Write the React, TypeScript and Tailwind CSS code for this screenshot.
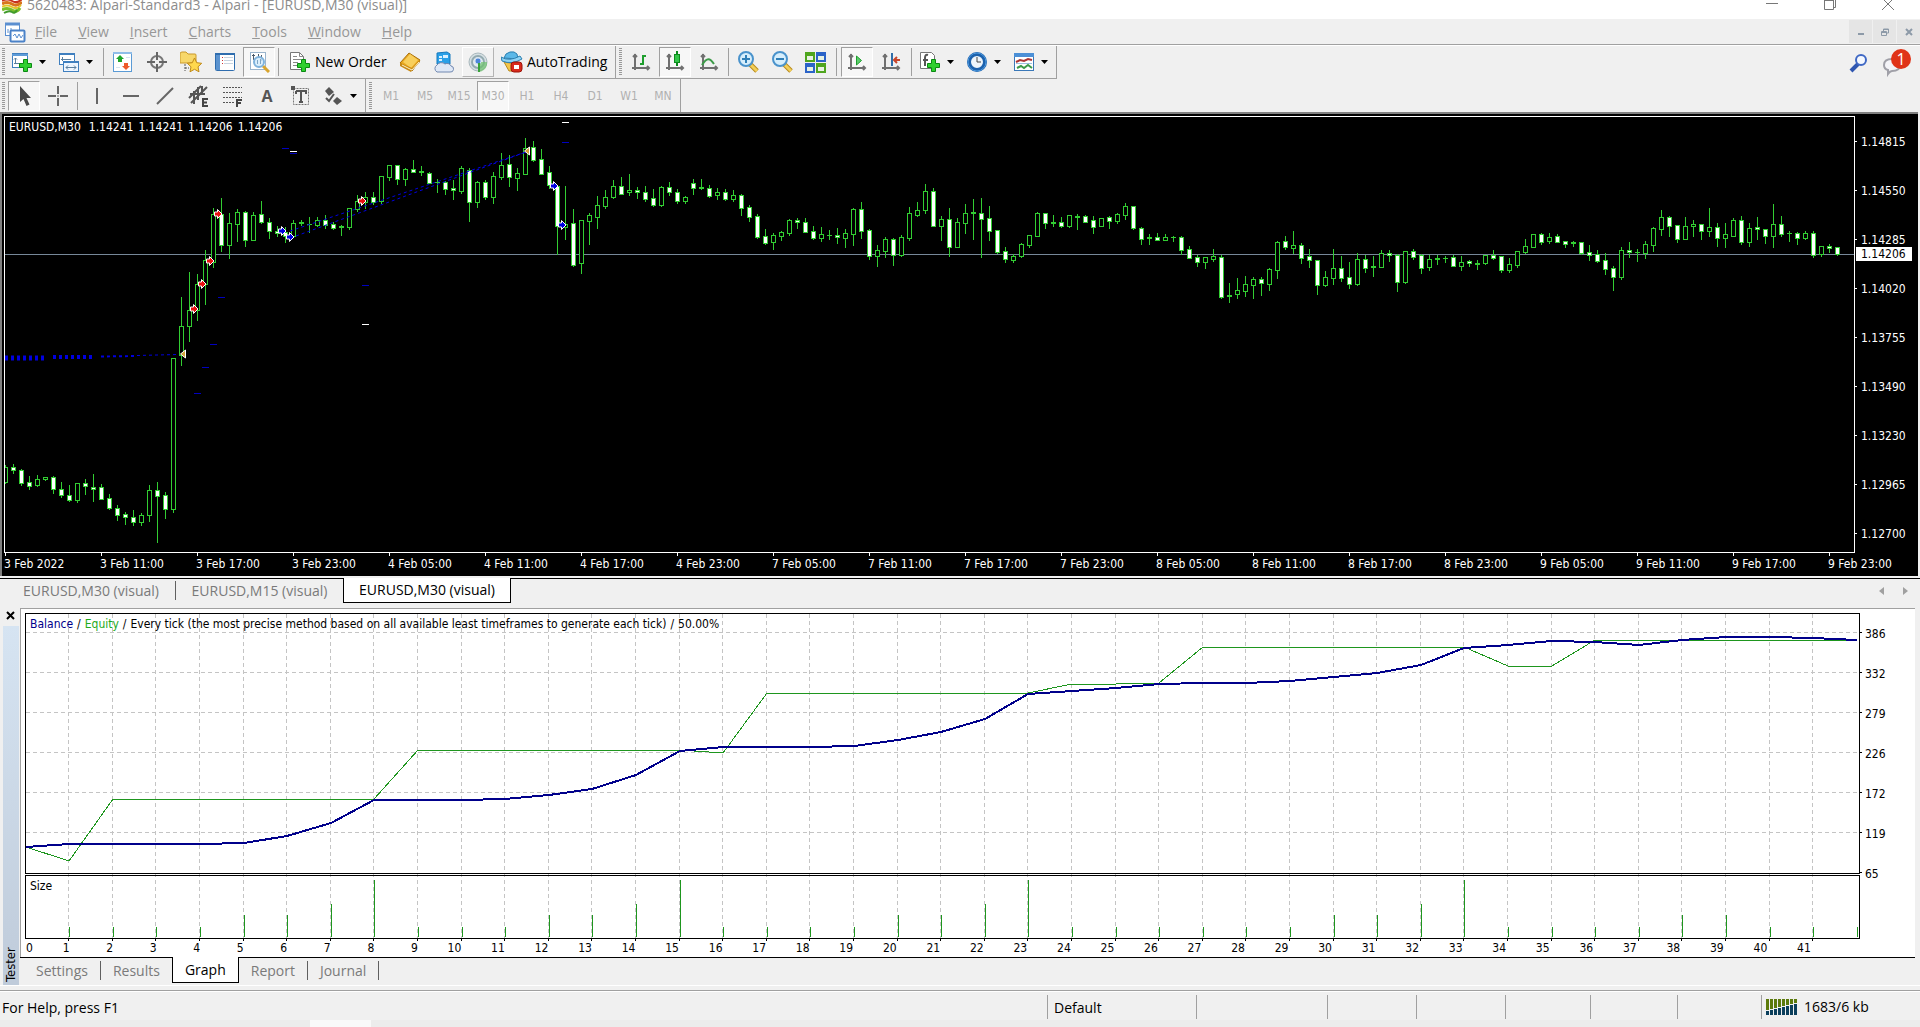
import type { ReactNode } from "react";
import clsx from "clsx";

// [high, open, close, low] as vertical plot positions, one candle every 8px
const candles: number[][] = [
  [355, 372, 357, 373], [354, 357, 360, 363], [359, 360, 373, 375], [366, 372, 376, 379], [365, 375, 369, 376],
  [367, 369, 367, 370], [366, 367, 379, 383], [372, 379, 385, 387], [375, 385, 390, 391], [373, 390, 373, 392],
  [369, 373, 376, 384], [364, 377, 379, 391], [374, 377, 389, 389], [384, 388, 398, 399], [395, 398, 405, 410],
  [402, 404, 407, 414], [400, 407, 412, 415], [403, 412, 405, 415], [375, 405, 380, 411], [372, 380, 386, 432],
  [382, 385, 399, 408], [248, 399, 248, 402], [187, 245, 216, 255], [162, 216, 200, 231], [164, 200, 174, 210],
  [140, 174, 150, 194], [98, 152, 104, 157], [88, 104, 135, 141], [103, 135, 113, 148], [99, 114, 102, 131],
  [101, 102, 130, 136], [102, 130, 105, 130], [91, 104, 112, 113], [108, 112, 121, 128], [116, 121, 123, 126],
  [117, 122, 126, 132], [110, 126, 113, 127], [110, 112, 113, 115], [107, 114, 114, 122], [107, 115, 110, 116],
  [105, 110, 115, 118], [112, 114, 118, 119], [115, 116, 117, 125], [98, 117, 98, 119], [85, 99, 91, 101],
  [82, 92, 87, 98], [82, 87, 92, 94], [66, 91, 66, 93], [55, 67, 55, 70], [55, 55, 69, 74],
  [58, 69, 59, 75], [50, 59, 62, 62], [56, 61, 62, 65], [62, 63, 73, 73], [69, 72, 72, 82],
  [71, 72, 79, 84], [70, 78, 80, 89], [56, 81, 58, 83], [58, 60, 92, 111], [71, 92, 72, 97],
  [70, 72, 87, 89], [62, 87, 66, 93], [43, 67, 55, 69], [45, 54, 67, 76], [58, 68, 63, 80],
  [28, 64, 38, 64], [31, 37, 50, 51], [39, 49, 64, 64], [56, 62, 75, 78], [75, 76, 116, 144],
  [76, 117, 114, 129], [99, 113, 155, 156], [110, 153, 110, 163], [103, 111, 105, 134], [86, 107, 95, 118],
  [80, 96, 87, 98], [70, 87, 76, 88], [67, 76, 84, 84], [64, 82, 80, 85], [77, 80, 82, 88],
  [76, 82, 89, 91], [79, 88, 95, 96], [76, 95, 77, 96], [72, 77, 82, 85], [79, 82, 91, 93],
  [86, 91, 87, 93], [69, 73, 78, 84], [69, 77, 78, 79], [75, 78, 86, 87], [78, 85, 82, 89],
  [79, 82, 89, 90], [80, 89, 85, 91], [84, 85, 98, 105], [95, 97, 107, 111], [104, 106, 127, 128],
  [119, 126, 133, 134], [123, 132, 125, 139], [121, 126, 122, 130], [109, 123, 110, 125], [108, 110, 112, 118],
  [108, 112, 122, 122], [116, 121, 128, 129], [117, 128, 124, 131], [120, 125, 125, 129], [118, 125, 127, 133],
  [119, 128, 123, 137], [98, 124, 99, 135], [92, 99, 121, 128], [119, 120, 146, 149], [135, 146, 140, 156],
  [127, 141, 129, 147], [128, 129, 145, 155], [125, 145, 127, 146], [97, 128, 103, 130], [92, 105, 100, 106],
  [74, 100, 81, 103], [78, 81, 116, 116], [106, 116, 109, 130], [98, 109, 137, 146], [108, 137, 112, 137],
  [94, 113, 103, 123], [89, 102, 103, 129], [88, 103, 109, 147], [96, 108, 121, 130], [120, 120, 142, 143],
  [137, 141, 149, 152], [144, 150, 146, 152], [133, 146, 134, 147], [125, 135, 125, 137], [102, 126, 103, 126],
  [103, 103, 113, 118], [105, 112, 113, 116], [107, 112, 116, 117], [105, 116, 105, 117], [104, 106, 107, 119],
  [105, 106, 112, 112], [106, 110, 117, 123], [108, 116, 108, 116], [106, 107, 111, 118], [103, 111, 104, 113],
  [93, 105, 96, 109], [96, 96, 118, 119], [117, 118, 129, 134], [124, 127, 128, 134], [123, 127, 130, 130],
  [124, 130, 127, 130], [126, 127, 127, 131], [126, 127, 140, 144], [136, 139, 148, 148], [145, 147, 152, 156],
  [147, 152, 147, 158], [139, 149, 146, 151], [145, 147, 187, 188], [173, 185, 186, 192], [168, 184, 180, 188],
  [166, 181, 174, 186], [167, 175, 169, 188], [167, 169, 173, 185], [158, 174, 159, 180], [131, 160, 132, 168],
  [126, 131, 137, 139], [121, 138, 135, 143], [133, 135, 148, 153], [139, 146, 150, 157], [150, 150, 175, 184],
  [161, 175, 167, 176], [139, 168, 158, 174], [146, 158, 168, 171], [152, 167, 174, 178], [143, 174, 149, 175],
  [145, 149, 158, 162], [146, 156, 157, 166], [140, 157, 143, 157], [140, 143, 145, 151], [144, 145, 172, 181],
  [141, 172, 141, 173], [139, 141, 147, 149], [144, 145, 158, 163], [145, 157, 149, 160], [145, 148, 149, 154],
  [146, 148, 148, 152], [145, 147, 156, 156], [146, 156, 152, 160], [150, 151, 153, 156], [150, 153, 154, 159],
  [145, 153, 145, 154], [140, 145, 148, 149], [146, 146, 160, 162], [148, 160, 154, 162], [141, 155, 141, 157],
  [129, 142, 136, 143], [124, 137, 124, 137], [123, 124, 132, 134], [123, 131, 127, 133], [124, 126, 132, 132],
  [131, 131, 134, 137], [131, 132, 133, 136], [132, 132, 143, 144], [135, 142, 145, 150], [140, 144, 151, 152],
  [143, 150, 159, 164], [156, 158, 167, 180], [137, 167, 140, 169], [132, 140, 142, 147], [139, 142, 142, 151],
  [131, 143, 134, 148], [117, 135, 118, 141], [100, 119, 107, 125], [106, 107, 116, 126], [115, 115, 129, 132],
  [107, 129, 116, 129], [110, 116, 114, 126], [114, 114, 121, 129], [98, 121, 117, 126], [113, 117, 128, 136],
  [113, 128, 124, 137], [108, 126, 110, 126], [106, 110, 132, 134], [113, 132, 118, 136], [107, 117, 119, 129],
  [119, 119, 126, 133], [94, 126, 114, 137], [106, 114, 124, 126], [121, 123, 123, 131], [122, 123, 128, 134],
  [121, 128, 123, 129], [121, 123, 145, 147], [136, 144, 136, 146], [134, 136, 138, 142], [137, 137, 144, 145],
];

const sells = [[194, 199], [202, 174], [210, 151], [218, 104], [362, 91]];
const buys = [[282, 121], [290, 127], [554, 76], [562, 115]];
const closes = [[183, 244], [527, 41]];
const stops = [[282, 38], [290, 43], [218, 187], [210, 234], [202, 257], [194, 283], [562, 32], [362, 175]];
const limits = [[290, 41], [562, 12], [362, 214]];

const prices = ["1.14815", "1.14550", "1.14285", "1.14020", "1.13755", "1.13490", "1.13230", "1.12965", "1.12700"];
const times = [
  "3 Feb 2022", "3 Feb 11:00", "3 Feb 17:00", "3 Feb 23:00", "4 Feb 05:00", "4 Feb 11:00", "4 Feb 17:00",
  "4 Feb 23:00", "7 Feb 05:00", "7 Feb 11:00", "7 Feb 17:00", "7 Feb 23:00", "8 Feb 05:00", "8 Feb 11:00",
  "8 Feb 17:00", "8 Feb 23:00", "9 Feb 05:00", "9 Feb 11:00", "9 Feb 17:00", "9 Feb 23:00",
];

// one value per closed trade, 0..42
const balance = [
  847, 844, 844, 844, 844, 843, 836, 823, 800, 800, 800, 799, 795, 789, 775, 751, 747, 747, 747, 746, 740, 732,
  719, 694, 691, 688, 684, 683, 683, 681, 677, 673, 665, 648, 645, 641, 642, 645, 640, 637, 637, 638, 640,
];
const equity = [
  847, 861, 799, 799, 799, 799, 799, 799, 799, 750, 750, 750, 750, 750, 750, 750, 753, 693, 693, 693, 693, 693,
  693, 693, 684, 684, 683, 647, 647, 647, 647, 647, 647, 647, 666, 666, 640, 640, 640, 640, 640, 640, 640,
];
const lots = [
  0, 10, 10, 10, 10, 22, 22, 33, 57, 10, 10, 10, 22, 22, 33, 57, 10, 10, 10, 10, 22, 22, 33, 57, 10, 10, 10, 10,
  10, 10, 22, 22, 33, 57, 10, 10, 10, 10, 22, 22, 10, 10, 10,
];
const money = ["386", "332", "279", "226", "172", "119", "65"];
const tradeX = (k: number) => Math.round(25.6 + k * 43.6);

function Svg({ children, size = 22 }: { children: ReactNode; size?: number }) {
  return (
    <svg width={size} height={size} viewBox={`0 0 ${size} ${size}`} fill="none" aria-hidden="true" className="shrink-0">
      {children}
    </svg>
  );
}

const Plus = () => (
  <path d="M12.500 8.500h4v4h4v4h-4v4h-4v-4h-4v-4h4z" fill="#2fd02f" stroke="#0a8a12" />
);

const NewChartIcon = () => (
  <Svg>
    <rect x="1.500" y="2.500" width="15" height="14" fill="#fff" stroke="#3f7fbf" />
    <path d="M1 4h16" stroke="#5d9bd8" strokeWidth="2" />
    <path d="M4.500 7v6M3 8.500l1.500-1.500 1.500 1.500M3 12.500h6" stroke="#5a7f9f" />
    <Plus />
  </Svg>
);
const ProfilesIcon = () => (
  <Svg>
    <rect x="1.500" y="2.500" width="15" height="11" fill="#fff" stroke="#3f7fbf" />
    <path d="M1 3h16" stroke="#3f7fbf" strokeWidth="2" />
    <path d="M4.500 6v4M3 8.500h10" stroke="#5a7f9f" />
    <rect x="5.500" y="10.500" width="15" height="10" fill="#eef6ff" stroke="#3f7fbf" />
    <path d="M5 11h16" stroke="#3f7fbf" strokeWidth="2" />
    <path d="M8 16.500h10M10 14.500l-2 2 2 2M16 14.500l2 2-2 2" stroke="#5a7f9f" />
  </Svg>
);
const MarketIcon = () => (
  <Svg>
    <rect x="1.500" y="1.500" width="18" height="19" fill="#fff" stroke="#5b9bd5" />
    <path d="M1 2h19" stroke="#8fbde8" strokeWidth="2" />
    <path d="M8 4l4 4h-2v3H6V8H4z" fill="#1ea52a" />
    <path d="M14 19l-4-4h2v-3h4v3h2z" fill="#ee5a2a" />
    <path d="M14 6.500h4M4 16.500h4" stroke="#d8e4f0" />
  </Svg>
);
const CrosshairIcon = () => (
  <Svg>
    <circle cx="11" cy="11" r="6" stroke="#777" strokeWidth="2" />
    <path d="M11 1v8M11 13v8M1 11h8M13 11h8" stroke="#666" strokeWidth="2" />
  </Svg>
);
const FavoritesIcon = () => (
  <Svg>
    <path d="M0 3q0-2 2-2h4l2 2h7q1 0 1 1v8H0z" fill="#f7d76a" stroke="#c9982a" />
    <path d="M5 13v7M5 17h4" stroke="#555" strokeDasharray="2 1" />
    <path d="M14.500 7l2.200 4.700 5 .6-3.700 3.500 1 5-4.500-2.500-4.500 2.500 1-5-3.700-3.500 5-.6z" fill="#ffd84d" stroke="#c08a18" />
  </Svg>
);
const NavigatorIcon = () => (
  <Svg>
    <rect x="1.500" y="2.500" width="19" height="17" rx="1" fill="#fff" stroke="#2f6dae" />
    <path d="M1 3h20" stroke="#2f6dae" strokeWidth="2" />
    <rect x="2" y="4" width="4" height="15" fill="#5b93cf" />
    <path d="M8 6.500h1M8 9.500h1M8 12.500h1" stroke="#c33" />
    <path d="M10 6.500h9M10 9.500h9M10 12.500h9" stroke="#c8d4e0" />
  </Svg>
);
const TesterIcon = () => (
  <Svg>
    <rect x="2.500" y="1.500" width="15" height="17" fill="#fff" stroke="#9ab4cc" />
    <path d="M5.500 3v6M4 4.500h3M10.500 3v4M13.500 4v6" stroke="#4a5a6a" />
    <path d="M15 15l6 6" stroke="#d9a52e" strokeWidth="3" />
    <circle cx="11" cy="11" r="5" fill="#d4ebfb" fillOpacity=".85" stroke="#7fb2dc" strokeWidth="2" />
    <path d="M9.500 9v4M12.500 8v5" stroke="#7fa6c6" />
  </Svg>
);
const OrderIcon = () => (
  <Svg>
    <path d="M1.500 1.500h9l4 4v13h-13z" fill="#fff" stroke="#777" />
    <path d="M10.500 1.500v4h4M4 5.500h4M4 8.500h8M4 11.500h5M4 14.500h4" stroke="#888" />
    <Plus />
  </Svg>
);
const BookIcon = () => (
  <Svg>
    <path d="M1 12L10 2l11 7-8 11z" fill="#e9a820" stroke="#a8700c" />
    <path d="M4 11l7-8 8 6-7 8z" fill="#f8cf5c" />
    <path d="M1 12v3l11 6 1-2 8-8V9l-8 8z" fill="#c98a16" />
    <path d="M3 14l10 5 7-8" stroke="#fff3c8" />
  </Svg>
);
const CloudIcon = () => (
  <Svg>
    <path d="M4 2l10-1 3 2v10H4z" fill="#2aa0e8" stroke="#1678bc" />
    <path d="M6 5h3v2H6zM10 4h5v3h-5zM6 8h3v2H6z" fill="#d9f0ff" />
    <path d="M4 21a4 4 0 010-7 5 4.500 0 018-1 4 3.500 0 016 2 3 3 0 01-1 6z" fill="#dfe8f6" stroke="#7188b0" />
  </Svg>
);
const SignalIcon = () => (
  <Svg>
    <circle cx="11" cy="11" r="9" fill="#d5dfe2" stroke="#a9b8bd" />
    <circle cx="11" cy="11" r="6" fill="#e4ecee" stroke="#93aab0" strokeWidth="2" />
    <path d="M11 11h9v3a9 9 0 01-9 7z" fill="#6cc06c" fillOpacity=".7" />
    <circle cx="11" cy="10" r="3" fill="#4d86d8" stroke="#c9dbf5" />
    <path d="M12 12v9" stroke="#3aa33a" strokeWidth="2" />
  </Svg>
);
const AutoIcon = () => (
  <Svg>
    <path d="M3 11q8 3 14 0l2 3-8 6h-3z" fill="#f3c64a" stroke="#b98a1c" />
    <path d="M3 7l2-4q4-3 8-2l3 2 1 5z" fill="#5bb8e8" stroke="#2a7fb0" />
    <path d="M0 6q8 5 19-1l2 3Q11 14 1 10z" fill="#8fd3f5" stroke="#2a7fb0" />
    <rect x="10" y="11" width="11" height="10" rx="3" fill="#d92a1c" stroke="#9c1409" />
    <rect x="13" y="14" width="5" height="4" fill="#fff" />
  </Svg>
);
const Axes = () => (
  <path d="M5 3v16M2 17h17M3 6l2-2 2 2M17 15l2 2-2 2" stroke="#707070" strokeWidth="2" />
);
const BarsIcon = () => (
  <Svg>
    <Axes />
    <path d="M13 4v10M10 13h3M13 5h3" stroke="#1e9e2e" strokeWidth="2" />
  </Svg>
);
const CandlesIcon = () => (
  <Svg>
    <Axes />
    <path d="M13 0v15" stroke="#0c8a1c" strokeWidth="2" />
    <rect x="10.500" y="3.500" width="5" height="8" fill="#33c648" stroke="#0c8a1c" />
  </Svg>
);
const LineIcon = () => (
  <Svg>
    <Axes />
    <path d="M4 14c5-8 8-7 12-1" stroke="#3c9a48" strokeWidth="2" />
  </Svg>
);
const ZoomIcon = ({ plus }: { plus?: boolean }) => (
  <Svg>
    <path d="M13 13l7 7" stroke="#b88a18" strokeWidth="5" />
    <path d="M14 14l6 6" stroke="#f2cf5a" strokeWidth="3" />
    <circle cx="9" cy="8" r="7" fill="#d6eefc" stroke="#4a93cc" strokeWidth="2" />
    <path d={plus ? "M5 8h8M9 4v8" : "M5 8h8"} stroke="#2f7fb8" strokeWidth="2" />
  </Svg>
);
const TileIcon = () => (
  <Svg>
    {[[0, 1, "#4fa51e"], [11, 1, "#2b63c8"], [0, 12, "#2b63c8"], [11, 12, "#4fa51e"]].map(([x, y, c]) => (
      <g key={`${x}-${y}`}>
        <rect x={x} y={y} width="10" height="10" fill={String(c)} />
        <rect x={Number(x) + 2} y={Number(y) + 4} width="6" height="4" fill="#e8f2e4" />
      </g>
    ))}
  </Svg>
);
const ScrollIcon = () => (
  <Svg>
    <Axes />
    <path d="M10.500 5v9l5-4.500z" fill="#5ccc6c" stroke="#1e9e2e" />
  </Svg>
);
const ShiftIcon = () => (
  <Svg>
    <Axes />
    <path d="M12 2v13" stroke="#2f6da8" strokeWidth="2" />
    <path d="M20 9h-5M17 6l-3 3 3 3" stroke="#c8452a" strokeWidth="2" />
  </Svg>
);
const IndicatorsIcon = () => (
  <Svg>
    <path d="M1.500 1.500h11l3 3v13h-14z" fill="#fff" stroke="#777" />
    <path d="M9 4q-3-1-3 3v8M4 9h5" stroke="#555" strokeWidth="2" />
    <Plus />
  </Svg>
);
const ClockIcon = () => (
  <Svg>
    <circle cx="11" cy="11" r="8" fill="#eef5fb" stroke="#1d62ad" strokeWidth="4" />
    <circle cx="11" cy="11" r="9" stroke="#4f9be0" />
    <path d="M11 6v5h4" stroke="#444" />
  </Svg>
);
const TemplateIcon = () => (
  <Svg>
    <rect x="1.500" y="2.500" width="19" height="17" fill="#fff" stroke="#3a78b8" />
    <rect x="1" y="2" width="20" height="4" fill="#4b8fd6" />
    <path d="M3 11l4-2 4 1 4-2 4 1" stroke="#a33" strokeWidth="2" />
    <path d="M3 12.500h16" stroke="#9cc0e0" />
    <path d="M4 17l4-2 3 2 4-3 4 3" stroke="#3c9a48" strokeWidth="2" />
  </Svg>
);

const CursorIcon = () => (
  <Svg>
    <path d="M7 1v16l3.500-3 3 7 3-1.500-3-6.500H18z" fill="#4a4a4a" />
  </Svg>
);
const CrossIcon = () => (
  <Svg>
    <path d="M11 1v8M11 13v8M1 11h8M13 11h8" stroke="#666" strokeWidth="2" />
    <path d="M10 11h2" stroke="#666" />
  </Svg>
);
const VLineIcon = () => (
  <Svg>
    <path d="M11 3v16" stroke="#666" strokeWidth="2" />
  </Svg>
);
const HLineIcon = () => (
  <Svg>
    <path d="M3 11h16" stroke="#666" strokeWidth="2" />
  </Svg>
);
const TrendIcon = () => (
  <Svg>
    <path d="M3 19L19 3" stroke="#666" strokeWidth="2" />
  </Svg>
);
const ChannelIcon = () => (
  <Svg>
    <path d="M1 13L13 1M3 18L19 2M6 6v13M10 2v13M14 1v9M2 9h15" stroke="#555" strokeWidth="2" />
    <path d="M20 14h-5v7h5M15 17.500h4" stroke="#444" strokeWidth="2" />
  </Svg>
);
const FiboIcon = () => (
  <Svg>
    <path d="M1 2.500h19M1 7.500h19M1 12.500h19M1 17.500h11" stroke="#555" strokeDasharray="2 1" />
    <path d="M20 15h-5v7M15 18h4" stroke="#444" strokeWidth="2" />
  </Svg>
);
const LabelIcon = () => (
  <Svg>
    <rect x="3.500" y="3.500" width="15" height="16" stroke="#777" strokeDasharray="2 1" />
    <path d="M6 6h10v3M6 6v3M11 6v11M9 17h4" stroke="#555" strokeWidth="2" />
    <rect x="1" y="1" width="4" height="4" fill="#555" />
  </Svg>
);
const ArrowsIcon = () => (
  <Svg>
    <path d="M7 2l5 5-5 4-4-5zM15 12l5 4-5 4-4-4z" fill="#555" />
    <path d="M4 13l3 3 5-7" stroke="#555" strokeWidth="2" />
  </Svg>
);

const Caret = () => (
  <svg width="7" height="4" viewBox="0 0 7 4" aria-hidden="true" className="shrink-0">
    <path d="M0 0h7L3.500 4z" fill="#000" />
  </svg>
);
const Sep = ({ wide }: { wide?: boolean }) => (
  <span className={clsx("h-7 w-px shrink-0 bg-[#a0a0a0]", wide ? "mx-[3px]" : "mx-0.5")} />
);
const Grip = () => (
  <span className="mx-0.5 h-7 w-[3px] shrink-0 bg-[repeating-linear-gradient(to_bottom,#9a9a9a_0_1px,transparent_1px_2px)]" />
);

function Tool({ label, pressed, framed, children }: { label: string; pressed?: boolean; framed?: boolean; children: ReactNode }) {
  return (
    <button
      type="button"
      aria-label={label}
      aria-pressed={pressed}
      className={clsx(
        "mx-px flex h-[30px] w-8 shrink-0 items-center justify-center border",
        pressed && "border-t-[#a0a0a0] border-r-white border-b-white border-l-[#a0a0a0] bg-[#f7f7f7]",
        framed && "border-t-white border-r-[#b4b4b4] border-b-[#b4b4b4] border-l-white bg-[#f2f2f2]",
        !pressed && !framed && "border-transparent",
      )}
    >
      {children}
    </button>
  );
}

function Split({ label, children }: { label: string; children: ReactNode }) {
  return (
    <button type="button" aria-label={label} className="flex h-[30px] w-[47px] shrink-0 items-center gap-1.5 pl-1">
      {children}
      <Caret />
    </button>
  );
}

function TitleBar() {
  return (
    <header className="flex h-[19px] items-start bg-white pl-0.5">
      <svg width="20" height="14" viewBox="0 0 20 14" fill="none" aria-hidden="true">
        <path d="M0 1q5-3 10 0t10-2" stroke="#c8321e" strokeWidth="2" />
        <path d="M0 4q5-3 10 0t10-2" stroke="#d8741e" strokeWidth="3" />
        <path d="M0 7q5-3 10 0t9-2" stroke="#e2c52a" strokeWidth="2" />
        <path d="M0 10q5-3 10 0t8-2" stroke="#7cbf2a" strokeWidth="3" />
        <path d="M2 13q5-3 8-1t5-2" stroke="#3f9a2a" strokeWidth="2" />
      </svg>
      <h1 className="-mt-[3px] ml-[5px] text-sm leading-4 text-[#8c8c8c]">
        5620483: Alpari-Standard3 - Alpari - [EURUSD,M30 (visual)]
      </h1>
      <div className="ml-auto flex gap-[46px] pr-[26px] text-[#777]">
        <button type="button" aria-label="Minimize">
          <svg width="12" height="10" viewBox="0 0 12 10" fill="none"><path d="M0 3.500h12" stroke="currentColor" /></svg>
        </button>
        <button type="button" aria-label="Restore">
          <svg width="12" height="10" viewBox="0 0 12 10" fill="none">
            <path d="M.5 0v9.500h9V0M.5.500h9M11.500 0v7.500h-2" stroke="currentColor" />
          </svg>
        </button>
        <button type="button" aria-label="Close">
          <svg width="12" height="10" viewBox="0 0 12 10" fill="none"><path d="M0-2l12 12M12-2L0 10" stroke="currentColor" /></svg>
        </button>
      </div>
    </header>
  );
}

const menus = ["File", "View", "Insert", "Charts", "Tools", "Window", "Help"];

function MenuBar() {
  return (
    <nav className="flex h-[26px] items-center border-b border-[#a0a0a0] pl-1 text-[#979797]">
      <Svg>
        <rect x="1.500" y="2.500" width="14" height="12" fill="#fff" stroke="#5b8fd0" />
        <path d="M1 3h15" stroke="#5b8fd0" strokeWidth="3" />
        <path d="M4 8v4M7 7v4" stroke="#5b8fd0" />
        <rect x="6.500" y="9.500" width="14" height="11" rx="1" fill="#fff" stroke="#4b82c8" strokeWidth="2" />
        <path d="M9 15l2-2 2 4 2-4 2 4 2-3" stroke="#5b8fd0" />
      </Svg>
      <div className="ml-[9px] flex gap-[21px] text-sm">
        {menus.map((m) => (
          <button key={m} type="button">
            <u>{m[0]}</u>
            {m.slice(1)}
          </button>
        ))}
      </div>
      <div className="ml-auto flex gap-px text-[#8d9aa8]">
        <button type="button" aria-label="Minimize chart" className="flex size-[23px] items-center justify-center bg-[#e5e5e5]">
          <svg width="8" height="8" viewBox="0 0 8 8"><path d="M1 5h6v2H1z" fill="currentColor" /></svg>
        </button>
        <button type="button" aria-label="Restore chart" className="flex size-[23px] items-center justify-center bg-[#e5e5e5]">
          <svg width="8" height="8" viewBox="0 0 8 8" fill="none">
            <path d="M2.500 3V1h5v4H6M.5 3.500h5v4h-5zM.5 4.500h5M2.500 1.500h5" stroke="currentColor" />
          </svg>
        </button>
        <button type="button" aria-label="Close chart" className="flex size-[23px] items-center justify-center bg-[#e5e5e5]">
          <svg width="8" height="8" viewBox="0 0 8 8"><path d="M1 1l6 6M7 1L1 7" stroke="currentColor" strokeWidth="2" /></svg>
        </button>
      </div>
    </nav>
  );
}

function MainToolbar() {
  return (
    <div className="flex h-[34px] items-center border-t border-white">
      <div className="flex h-[33px] items-center border-r border-b border-[#a0a0a0]">
        <Grip />
        <Split label="New chart"><NewChartIcon /></Split>
        <Split label="Profiles"><ProfilesIcon /></Split>
        <Sep />
        <Tool label="Market Watch"><MarketIcon /></Tool>
        <Tool label="Data Window"><CrosshairIcon /></Tool>
        <Tool label="Favorites"><FavoritesIcon /></Tool>
        <Tool label="Navigator"><NavigatorIcon /></Tool>
        <Tool label="Strategy Tester" pressed><TesterIcon /></Tool>
        <Sep />
        <button type="button" className="flex h-[30px] w-28 items-center gap-1 pl-2 text-sm whitespace-nowrap text-black">
          <OrderIcon />
          New Order
        </button>
        <Tool label="MetaEditor"><BookIcon /></Tool>
        <Tool label="Virtual Hosting"><CloudIcon /></Tool>
        <Tool label="Signals" framed><SignalIcon /></Tool>
        <button type="button" className="flex h-[30px] w-[120px] items-center gap-1 pl-1.5 text-sm whitespace-nowrap text-black">
          <AutoIcon />
          AutoTrading
        </button>
      </div>
      <div className="flex h-[33px] items-center border-r border-b border-[#a0a0a0] pl-px">
        <Grip />
        <Tool label="Bar chart"><BarsIcon /></Tool>
        <Tool label="Candlesticks" pressed><CandlesIcon /></Tool>
        <Tool label="Line chart"><LineIcon /></Tool>
        <Sep />
        <Tool label="Zoom in"><ZoomIcon plus /></Tool>
        <Tool label="Zoom out"><ZoomIcon /></Tool>
        <Tool label="Tile windows"><TileIcon /></Tool>
        <Sep wide />
        <Tool label="Auto scroll" pressed><ScrollIcon /></Tool>
        <Tool label="Chart shift"><ShiftIcon /></Tool>
        <Sep wide />
        <Split label="Indicators"><IndicatorsIcon /></Split>
        <Split label="Periods"><ClockIcon /></Split>
        <Split label="Templates"><TemplateIcon /></Split>
      </div>
      <div className="ml-auto flex items-center gap-3 pr-[7px]">
        <button type="button" aria-label="Search">
          <svg width="20" height="20" viewBox="0 0 20 20" fill="none">
            <path d="M2 18l7-7" stroke="#2f56b0" strokeWidth="4" />
            <circle cx="12" cy="7" r="5" fill="#f4f8ff" stroke="#3f68c4" strokeWidth="2" />
          </svg>
        </button>
        <button type="button" aria-label="Notifications" className="relative">
          <svg width="32" height="30" viewBox="0 0 32 30" fill="none">
            <path d="M3 17q0-6 8-6t8 6-8 6q-2 0-4 3v-4q-4-1-4-5z" fill="#f4f4f8" stroke="#a0a0a8" strokeWidth="2" />
            <circle cx="20" cy="11" r="10" fill="#e03318" />
          </svg>
          <span className="absolute -top-px left-2 w-6 text-center text-base leading-6 text-white">1</span>
        </button>
      </div>
    </div>
  );
}

const periods = ["M1", "M5", "M15", "M30", "H1", "H4", "D1", "W1", "MN"];

function DrawToolbar() {
  return (
    <div className="flex h-[33px] items-center">
      <div className="flex h-[33px] items-center border-r border-[#a0a0a0]">
        <Grip />
        <Tool label="Cursor" pressed><CursorIcon /></Tool>
        <Tool label="Crosshair"><CrossIcon /></Tool>
        <Sep />
        <Tool label="Vertical line"><VLineIcon /></Tool>
        <Tool label="Horizontal line"><HLineIcon /></Tool>
        <Tool label="Trendline"><TrendIcon /></Tool>
        <Tool label="Equidistant channel"><ChannelIcon /></Tool>
        <Tool label="Fibonacci retracement"><FiboIcon /></Tool>
        <Tool label="Text"><span className="text-base font-bold text-[#555]">A</span></Tool>
        <Tool label="Text label"><LabelIcon /></Tool>
        <Split label="Arrows"><ArrowsIcon /></Split>
      </div>
      <div className="flex h-[33px] items-center border-r border-[#a0a0a0] pl-px">
        <Grip />
        {periods.map((p) => (
          <Tool key={p} label={p} pressed={p === "M30"}>
            <span className="font-['DejaVu_Sans_Condensed','DejaVu_Sans',sans-serif] text-xs text-[#b0b0b0]">{p}</span>
          </Tool>
        ))}
      </div>
    </div>
  );
}

function Candles() {
  return (
    <g stroke="#32cd32" shapeRendering="crispEdges">
      {candles.map(([high, open, close, low], i) => {
        const x = 5.5 + i * 8;
        const top = Math.min(open, close);
        const height = Math.abs(open - close);
        return (
          <g key={i}>
            <path d={`M${x} ${high}V${low + 1}`} />
            {height === 0 ? (
              <path d={`M${x - 2.5} ${top + 0.5}h5`} />
            ) : (
              <rect x={x - 2} y={top + 0.5} width="4" height={height} fill={close > open ? "#fff" : "#000"} />
            )}
          </g>
        );
      })}
    </g>
  );
}

function PriceChart() {
  const arrow = (fill: string) => ([x, y]: number[]) => (
    <path
      key={`${x}-${y}`}
      d={`M${x - 3.5} ${y - 2}h3v-2.500l4.500 4.500l-4.500 4.500v-2.500h-3z`}
      fill={fill}
      stroke="#fff"
    />
  );
  const dash = (stroke: string) => ([x, y]: number[]) => (
    <path key={`${x}-${y}`} d={`M${x} ${y + 0.5}h7`} stroke={stroke} shapeRendering="crispEdges" />
  );

  return (
    <main className="mr-0.5 border-t-2 border-l-2 border-[#808080] bg-black pt-0.5 pl-0.5 font-['DejaVu_Sans_Condensed','DejaVu_Sans',sans-serif] text-xs text-white">
      <div className="relative flex h-[437px]">
        <div className="relative min-w-0 flex-1 border border-white">
          <svg viewBox="5 7 1849 435" preserveAspectRatio="none" className="block h-[435px] w-full" fill="none">
            <path d="M5 144.500h1849" stroke="#778899" shapeRendering="crispEdges" />
            <Candles />
            <g stroke="#0000e0" strokeDasharray="3 3">
              <path d="M5 248L47 248" strokeWidth="5" />
              <path d="M53 247L95 247" strokeWidth="4" />
              <path d="M101 246.500L137 246" strokeWidth="2" />
              <path d="M137 245.500L178 244.500" />
              <path d="M290 121L526 42M296 126L526 42" />
            </g>
            {stops.map(dash("#0000c0"))}
            {limits.map(dash("#fff"))}
            {sells.map(arrow("#e81010"))}
            {buys.map(arrow("#0000e0"))}
            {closes.map(([x, y]) => (
              <path key={x} d={`M${x + 2.5} ${y - 4}v8l-5-4z`} fill="#d4a53a" stroke="#fff" />
            ))}
          </svg>
          <p className="absolute top-0.5 left-1 flex gap-[5px] leading-4">
            <span className="mr-[3px]">EURUSD,M30</span>
            <span>1.14241</span>
            <span>1.14241</span>
            <span>1.14206</span>
            <span>1.14206</span>
          </p>
        </div>
        <div className="w-[63px] pt-px">
          {prices.map((p) => (
            <div key={p} className="flex h-[49px] items-center gap-1">
              <span className="h-px w-0.5 bg-white" />
              {p}
            </div>
          ))}
        </div>
        <span className="absolute top-[131px] right-1.5 w-14 bg-white pl-[5px] leading-[14px] text-black">1.14206</span>
      </div>
      <div className="flex h-[23px] overflow-hidden pl-px">
        {times.map((t) => (
          <div key={t} className="w-24 shrink-0 whitespace-nowrap">
            <span className="block h-[3px] w-px bg-white" />
            <span className="-ml-px block leading-4">{t}</span>
          </div>
        ))}
      </div>
    </main>
  );
}

function ChartTabs() {
  return (
    <div className="mt-0.5 flex h-[25px] items-start border-t border-black pl-[7px] text-sm text-[#7a7a7a]">
      <button type="button" className="h-6 w-[168px] leading-6">EURUSD,M30 (visual)</button>
      <span className="mt-0.5 h-[19px] w-px shrink-0 bg-[#606060]" />
      <button type="button" className="h-6 w-[167px] leading-6">EURUSD,M15 (visual)</button>
      <button type="button" className="-mt-px h-[25px] w-[168px] border border-t-0 border-black bg-white leading-6 text-black">
        EURUSD,M30 (visual)
      </button>
      <div className="ml-auto flex gap-[19px] self-center pr-3">
        <button type="button" aria-label="Scroll tabs left">
          <svg width="5" height="8" viewBox="0 0 5 8"><path d="M5 0v8L0 4z" fill="#a0a0a0" /></svg>
        </button>
        <button type="button" aria-label="Scroll tabs right">
          <svg width="5" height="8" viewBox="0 0 5 8"><path d="M0 0v8l5-4z" fill="#a0a0a0" /></svg>
        </button>
      </div>
    </div>
  );
}

const linePoints = (values: number[]) => values.map((y, k) => `${tradeX(k)},${y}`).join(" ");

function TesterGraph() {
  return (
    <div className="relative flex border-t border-l border-[#a0a0a0] bg-white pt-1 pl-1 font-['DejaVu_Sans_Condensed','DejaVu_Sans',sans-serif] text-xs text-black">
      <div className="min-w-0 flex-1">
        <svg viewBox="25 613 1837 328" preserveAspectRatio="none" className="block h-[328px] w-full" fill="none">
          <g stroke="#c4c4c4" strokeDasharray="4 3" shapeRendering="crispEdges">
            {money.slice(0, 6).map((m, i) => (
              <path key={m} d={`M26 ${632.5 + i * 40}H1859`} />
            ))}
            {lots.slice(1, 42).map((_, i) => (
              <path key={i} d={`M${tradeX(i + 1) - 0.5} 614V938`} />
            ))}
          </g>
          <g stroke="#000" shapeRendering="crispEdges">
            <rect x="25.500" y="613.500" width="1834" height="260" />
            <rect x="25.500" y="875.500" width="1834" height="63" />
            {money.map((m, i) => (
              <path key={m} d={`M1860 ${632.5 + i * 40}h2`} />
            ))}
            {lots.slice(1, 42).map((_, i) => (
              <path key={i} d={`M${tradeX(i + 1) - 0.5} 939v2`} />
            ))}
          </g>
          <g stroke="#1e961e" shapeRendering="crispEdges">
            {lots.map((h, k) => h > 0 && <path key={k} d={`M${tradeX(k) + 0.5} ${937 - h}V937`} />)}
            <polyline points={linePoints(equity)} />
          </g>
          <polyline points={linePoints(balance)} stroke="#00008b" strokeWidth="2" shapeRendering="crispEdges" />
        </svg>
        <div className="flex h-4 pr-2 pb-px leading-[15px]">
          {lots.slice(1).map((_, i) => (
            <span key={i} className={clsx("flex flex-1 basis-0", i === 0 ? "justify-between pl-px" : "justify-end")}>
              {i === 0 && <span>0</span>}
              {i < 41 && <span>{i + 1}</span>}
            </span>
          ))}
        </div>
      </div>
      <div className="w-[53px] pt-px pl-[3px]">
        {money.map((m) => (
          <div key={m} className="flex h-10 items-center">{m}</div>
        ))}
      </div>
      <p className="absolute top-[7px] left-[9px] flex gap-1 leading-4 whitespace-nowrap">
        <span className="text-[#00008b]">Balance</span>
        <span>/</span>
        <span className="text-[#1eaa1e]">Equity</span>
        <span>/</span>
        <span>
          Every tick (the most precise method based on all available least timeframes to generate each tick)
        </span>
        <span>/</span>
        <span>50.00%</span>
      </p>
      <p className="absolute top-[269px] left-[9px] leading-4">Size</p>
    </div>
  );
}

const tabs = ["Settings", "Results", "Graph", "Report", "Journal"];

function Tester() {
  return (
    <section className="mt-[5px] flex h-[378px] border-b border-white pr-[5px]">
      <div className="flex w-5 flex-col items-center pl-[3px]">
        <button type="button" aria-label="Close tester" className="flex h-[18px] w-4 items-center pb-1 pl-0.5">
          <svg width="9" height="9" viewBox="0 0 9 9"><path d="M1 1l7 7M8 1L1 8" stroke="#000" strokeWidth="2" /></svg>
        </button>
        <div className="mr-px flex w-4 flex-1 rotate-180 items-center justify-start bg-linear-to-t from-[#d6e4f2] to-[#bfcbda] pt-[3px] [writing-mode:vertical-rl]">
          <span className="font-['DejaVu_Sans_Condensed','DejaVu_Sans',sans-serif] text-[13px] leading-4 text-black">Tester</span>
        </div>
      </div>
      <div className="min-w-0 flex-1">
        <TesterGraph />
        <div className="flex h-7 items-start border-t border-black pl-1 text-sm text-[#7a7a7a]">
          {tabs.map((t) =>
            t === "Graph" ? (
              <button key={t} type="button" className="-mt-px h-[26px] border border-t-0 border-black bg-white px-3 pt-px leading-6 text-black">
                {t}
              </button>
            ) : (
              <button
                key={t}
                type="button"
                className={clsx("mt-[3px] h-[19px] px-3 leading-4", t !== "Results" && "border-r border-[#606060]")}
              >
                {t}
              </button>
            ),
          )}
        </div>
      </div>
    </section>
  );
}

function StatusBar() {
  return (
    <footer className="mt-1 border-t border-[#a0a0a0]">
      <div className="flex h-[29px] items-center border-t border-white pt-0.5 text-sm leading-[26px] text-black">
        <span className="h-6 flex-1 pl-0.5">For Help, press F1</span>
        <span className="h-6 w-[149px] border-l border-[#a0a0a0] pl-1.5">Default</span>
        <span className="h-6 w-[131px] border-l border-[#a0a0a0]" />
        <span className="h-6 w-[89px] border-l border-[#a0a0a0]" />
        <span className="h-6 w-[89px] border-l border-[#a0a0a0]" />
        <span className="h-6 w-[85px] border-l border-[#a0a0a0]" />
        <span className="h-6 w-[87px] border-l border-[#a0a0a0]" />
        <span className="h-6 w-[84px] border-l border-[#a0a0a0]" />
        <span className="flex h-6 w-[159px] items-center gap-1.5 border-l border-[#a0a0a0] pl-1">
          <svg width="32" height="16" viewBox="0 0 32 16" aria-hidden="true">
            {[0, 1, 2, 3, 4, 5, 6, 7].map((i) => (
              <g key={i}>
                <rect x={i * 4} y="0" width="3" height={11 - i} fill="#5c7a0c" />
                <rect x={i * 4} y={12 - i} width="3" height={4 + i} fill="#0c3f5c" />
              </g>
            ))}
          </svg>
          1683/6 kb
        </span>
      </div>
      <div className="flex h-[7px] bg-[#ececec] pl-[310px]">
        <span className="w-[61px] bg-[#f9f9f9]" />
      </div>
    </footer>
  );
}

export default function App() {
  return (
    <div className="min-h-screen overflow-hidden bg-[#f0f0f0] font-['Open_Sans','Noto_Sans',sans-serif]">
      <TitleBar />
      <MenuBar />
      <MainToolbar />
      <DrawToolbar />
      <PriceChart />
      <ChartTabs />
      <Tester />
      <StatusBar />
    </div>
  );
}
